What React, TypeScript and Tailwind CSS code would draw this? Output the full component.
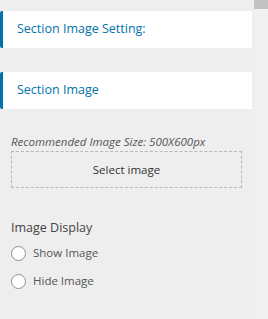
import React from "react";

function Radio({ label }: { label: string }) {
  return (
    <label className="flex items-center gap-[7px] h-[16px]">
      <span className="w-[15px] h-[15px] rounded-full border border-[#8c8f94] bg-white shrink-0" />
      <span className="text-[11.5px] text-[#555]">{label}</span>
    </label>
  );
}

export default function App() {
  return (
    <div
      className="w-[268px] h-[319px] bg-[#eeeeee] flex overflow-hidden"
      style={{ fontFamily: '"Open Sans", "Noto Sans", sans-serif' }}
    >
      <div className="w-[252px] flex flex-col">
        <div className="mt-[11px] h-[37px] bg-white border-l-[3px] border-[#0073aa] rounded-l-[2px] flex items-center pl-[14px] text-[12.5px] text-[#0073aa]">
          Section Image Setting:
        </div>
        <div className="mt-[24px] h-[37px] bg-white border-l-[3px] border-[#0073aa] rounded-l-[2px] flex items-center pl-[14px] text-[12.5px] text-[#0073aa]">
          Section Image
        </div>
        <div className="px-[11px]">
          <div className="mt-[26px] text-[11.5px] italic text-[#555] leading-[14px]">
            Recommended Image Size: 500X600px
          </div>
          <div className="mt-[2px] w-[231px] h-[37px] border border-dashed border-[#b4b9be] flex items-center justify-center text-[11.5px] text-[#333]">
            Select image
          </div>
          <div className="mt-[32px] text-[12.5px] text-[#444] leading-[16px]">Image Display</div>
          <div className="mt-[9px] flex flex-col gap-[12px]">
            <Radio label="Show Image" />
            <Radio label="Hide Image" />
          </div>
        </div>
      </div>
      <div className="w-[2px]" />
      <div className="w-[14px] bg-[#f0f0f0] flex flex-col">
        <div className="h-[9px] bg-[#c1c1c1]" />
      </div>
    </div>
  );
}
